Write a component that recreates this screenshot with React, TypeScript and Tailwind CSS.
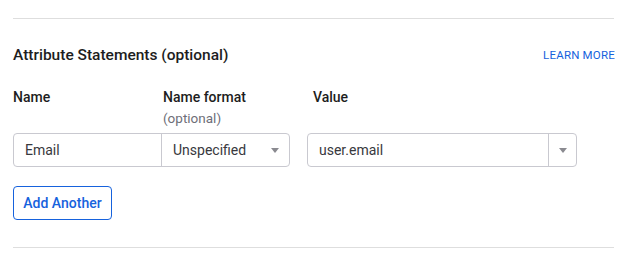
export default function App() {
  return (
    <div
      className="w-[628px] h-[264px] bg-white px-[13px] pt-[18px] text-[#1d1d21]"
      style={{ fontFamily: 'Roboto, Inter, sans-serif' }}
    >
      <div className="w-[601px] border-t border-[#dedede]" />

      {/* Section header */}
      <div className="flex items-center justify-between mt-[27px] h-[20px]">
        <h2 className="text-[15.5px] font-medium leading-none">Attribute Statements (optional)</h2>
        <a href="#" className="text-[11.5px] font-normal text-[#1662dd] tracking-[0.2px]">
          LEARN MORE
        </a>
      </div>

      {/* Column labels */}
      <div className="flex mt-[21px] text-[14px] leading-[20px]">
        <div className="w-[150px] font-medium">Name</div>
        <div className="w-[150px]">
          <div className="font-medium">Name format</div>
          <div className="text-[13.5px] text-[#6e6e78] mt-[1px]">(optional)</div>
        </div>
        <div className="font-medium">Value</div>
      </div>

      {/* Inputs row */}
      <div className="flex mt-[5px]">
        <div className="flex w-[277px] h-[34px] border border-[#c9c9d0] rounded-[4px]">
          <div className="w-[148px] border-r border-[#c9c9d0] flex items-center pl-[11px] text-[14px] text-[#38383d]">
            Email
          </div>
          <div className="flex-1 flex items-center justify-between pl-[11px] pr-[10px] text-[14px] text-[#38383d]">
            <span>Unspecified</span>
            <svg width="8" height="5" viewBox="0 0 8 5">
              <path d="M0 0h8L4 5z" fill="#8a8a90" />
            </svg>
          </div>
        </div>
        <div className="flex ml-[17px] w-[270px] h-[34px] border border-[#c9c9d0] rounded-[4px]">
          <div className="flex-1 flex items-center pl-[11px] text-[14px] text-[#38383d] border-r border-[#c9c9d0]">
            user.email
          </div>
          <div className="w-[27px] flex items-center justify-center">
            <svg width="8" height="5" viewBox="0 0 8 5">
              <path d="M0 0h8L4 5z" fill="#8a8a90" />
            </svg>
          </div>
        </div>
      </div>

      <button className="mt-[19px] h-[34px] w-[99px] border border-[#1662dd] rounded-[4px] text-[14px] font-medium text-[#1662dd] bg-white">
        Add Another
      </button>

      <div className="w-[601px] border-t border-[#dedede] mt-[27px]" />
    </div>
  )
}
